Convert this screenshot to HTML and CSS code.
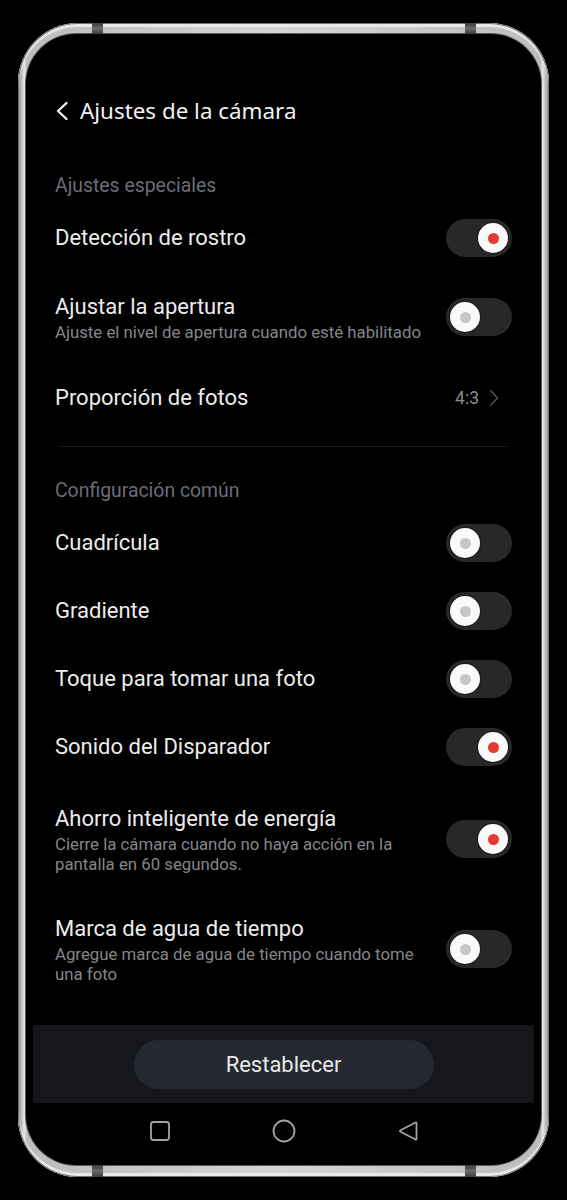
FILE: index.html
```html
<!DOCTYPE html>
<html lang="es">
<head>
    <meta charset="UTF-8">
    <meta name="viewport" content="width=device-width, initial-scale=1"/>
    <title>Ajustes de la cámara</title>
    <link rel="stylesheet" href="styles.css">
</head>
<body>
<div class="phone">
    <span class="notch top left"></span>
    <span class="notch top right"></span>
    <span class="notch bottom left"></span>
    <span class="notch bottom right"></span>
    <div class="screen">
        <header class="topbar">
            <svg class="back" width="14" height="20" viewBox="0 0 14 20">
                <path d="M11.5 2 L3 10 L11.5 18" fill="none" stroke="#f2f2f2" stroke-width="2.4" stroke-linecap="round" stroke-linejoin="round"/>
            </svg>
            <h1>Ajustes de la cámara</h1>
        </header>
        <main class="settings">
            <div class="section-label first">Ajustes especiales</div>
            <div class="row h64">
                <div class="text"><div class="title">Detección de rostro</div></div>
                <div class="toggle on"><span class="knob"></span></div>
            </div>
            <div class="row h94">
                <div class="text">
                    <div class="title">Ajustar la apertura</div>
                    <div class="sub">Ajuste el nivel de apertura cuando esté habilitado</div>
                </div>
                <div class="toggle"><span class="knob"></span></div>
            </div>
            <div class="row h68">
                <div class="text"><div class="title">Proporción de fotos</div></div>
                <div class="value">
                    4:3
                    <svg width="12" height="18" viewBox="0 0 12 18">
                        <path d="M3 2 L9.5 9 L3 16" fill="none" stroke="#4d4d50" stroke-width="1.8" stroke-linecap="round" stroke-linejoin="round"/>
                    </svg>
                </div>
            </div>
            <div class="divider"></div>
            <div class="section-label">Configuración común</div>
            <div class="row h68">
                <div class="text"><div class="title">Cuadrícula</div></div>
                <div class="toggle"><span class="knob"></span></div>
            </div>
            <div class="row h68">
                <div class="text"><div class="title">Gradiente</div></div>
                <div class="toggle"><span class="knob"></span></div>
            </div>
            <div class="row h68">
                <div class="text"><div class="title">Toque para tomar una foto</div></div>
                <div class="toggle"><span class="knob"></span></div>
            </div>
            <div class="row h68">
                <div class="text"><div class="title">Sonido del Disparador</div></div>
                <div class="toggle on"><span class="knob"></span></div>
            </div>
            <div class="row h116">
                <div class="text">
                    <div class="title">Ahorro inteligente de energía</div>
                    <div class="sub">Cierre la cámara cuando no haya acción en la pantalla en 60 segundos.</div>
                </div>
                <div class="toggle on"><span class="knob"></span></div>
            </div>
            <div class="row h104">
                <div class="text">
                    <div class="title">Marca de agua de tiempo</div>
                    <div class="sub">Agregue marca de agua de tiempo cuando tome una foto</div>
                </div>
                <div class="toggle"><span class="knob"></span></div>
            </div>
        </main>
        <div class="footer">
            <button>Restablecer</button>
        </div>
        <nav class="navbar">
            <div class="nav-item">
                <svg width="22" height="22" viewBox="0 0 22 22">
                    <rect x="2" y="2" width="18" height="18" rx="2.5" fill="none" stroke="#a3a3a3" stroke-width="1.8"/>
                </svg>
            </div>
            <div class="nav-item">
                <svg width="24" height="24" viewBox="0 0 24 24">
                    <circle cx="12" cy="12" r="10.5" fill="none" stroke="#a3a3a3" stroke-width="1.8"/>
                </svg>
            </div>
            <div class="nav-item">
                <svg width="22" height="24" viewBox="0 0 22 24">
                    <path d="M18.5 3.5 Q19.5 3 19.5 4.2 V19.8 Q19.5 21 18.5 20.5 L3.5 12.8 Q2.4 12 3.5 11.2 Z" fill="none" stroke="#a3a3a3" stroke-width="1.8" stroke-linejoin="round"/>
                </svg>
            </div>
        </nav>
    </div>
</div>
</body>
</html>
```

FILE: styles.css
```css
* {
    box-sizing: border-box;
}

body {
    margin: 0;
    background-color: #000;
    font-family: Roboto, 'Noto Sans', sans-serif;
}

.phone {
    position: relative;
    width: 531px;
    height: 1154px;
    margin: 23px 0 0 18px;
    padding: 11px 8px 12px;
    border-radius: 60px;
    background: linear-gradient(to right, #8c8c8c, #e9e9e9 1.2%, #bdbdbd 1.6%, #d4d4d4 50%, #bdbdbd 98.4%, #e9e9e9 98.8%, #8c8c8c);
    box-shadow: inset 0 0 0 1px #6f6f6f, inset 0 3px 0 1px #e8e8e8, inset 0 -3px 0 1px #e8e8e8;
}

.notch {
    position: absolute;
    width: 11px;
    height: 11px;
    background: linear-gradient(#3a3a3a, #6a6a6a, #3a3a3a);
}

.notch.top { top: 0; }
.notch.bottom { bottom: 0; height: 12px; }
.notch.left { left: 74px; }
.notch.right { left: 447px; }

.screen {
    height: 100%;
    border-radius: 50px;
    background-color: #000;
    box-shadow: 0 0 0 1px #5a5a5a;
    display: flex;
    flex-direction: column;
    overflow: hidden;
}

.topbar {
    height: 130px;
    padding: 59px 29px 0;
    display: flex;
    align-items: flex-start;
}

.back {
    margin-top: 8px;
    margin-right: 11px;
}

h1 {
    margin: 0;
    line-height: 36px;
    font-family: 'Noto Sans', sans-serif;
    font-size: 22.4px;
    font-weight: 400;
    color: #f2f2f2;
}

.settings {
    flex: 1;
    padding: 0 29px;
}

.section-label {
    height: 38px;
    display: flex;
    align-items: center;
    font-size: 19.4px;
    color: #6b6d78;
}

.section-label.first {
    height: 42px;
}

.row {
    display: flex;
    align-items: center;
    justify-content: space-between;
}

.h64 { height: 64px; }
.h68 { height: 68px; }
.h94 { height: 94px; }
.h104 { height: 104px; }
.h116 { height: 116px; }

.text {
    flex: 1;
    padding-right: 24px;
}

.title {
    font-size: 22px;
    line-height: 30px;
    color: #ececec;
}

.sub {
    font-size: 16.8px;
    line-height: 20px;
    color: #868689;
}

.toggle {
    flex: none;
    width: 66px;
    height: 38px;
    border-radius: 19px;
    background-color: #28282b;
    padding: 4px;
    display: flex;
    justify-content: flex-start;
}

.toggle.on {
    justify-content: flex-end;
}

.knob {
    width: 30px;
    height: 30px;
    border-radius: 50%;
    background-color: #fafafa;
    box-shadow: 0 0 0 1px #1a1a1a;
    display: flex;
    align-items: center;
    justify-content: center;
}

.knob::after {
    content: '';
    width: 11px;
    height: 11px;
    border-radius: 50%;
    background-color: #c6c6c8;
}

.toggle.on .knob::after {
    background-color: #e53a32;
}

.value {
    display: flex;
    align-items: center;
    gap: 9px;
    padding-right: 12px;
    font-size: 17.5px;
    color: #8a8a8d;
}

.divider {
    height: 1px;
    margin: 14px 5px 24px;
    background-color: #1d1d20;
}

.footer {
    height: 78px;
    margin: 0 7px;
    background-color: #15171d;
    display: flex;
    align-items: center;
    justify-content: center;
}

button {
    width: 300px;
    height: 49px;
    border: none;
    border-radius: 25px;
    background-color: #252830;
    color: #e8e8e8;
    font-family: Roboto, sans-serif;
    font-size: 22px;
}

.navbar {
    height: 62px;
    padding-bottom: 6px;
    display: flex;
    justify-content: center;
    align-items: center;
}

.nav-item {
    width: 124px;
    display: flex;
    justify-content: center;
}
```
